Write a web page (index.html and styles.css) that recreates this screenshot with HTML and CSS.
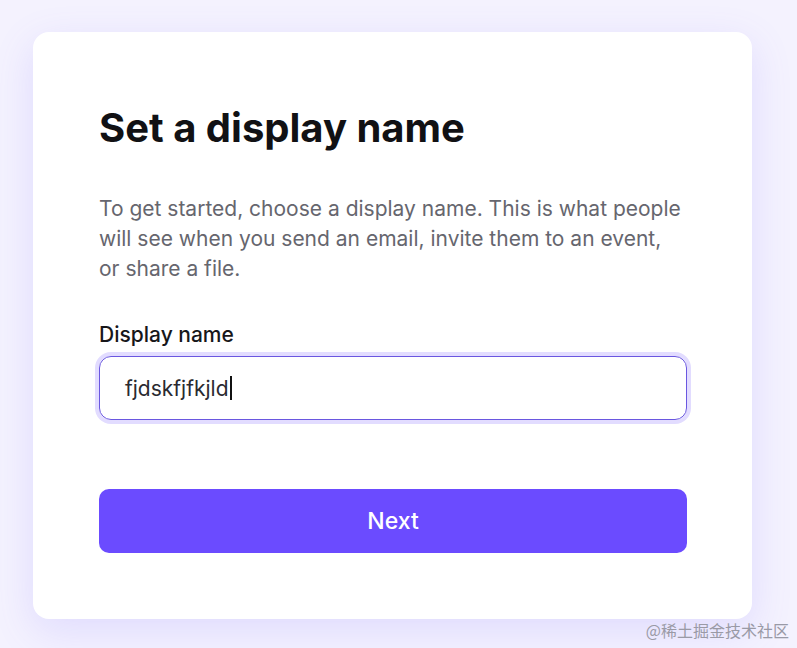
FILE: index.html
```html
<!DOCTYPE html>
<html lang="en">
<head>
<meta charset="utf-8">
<title>Set a display name</title>
<link rel="stylesheet" href="styles.css">
</head>
<body>
<main class="page">
  <section class="card">
    <h1 class="title">Set a display name</h1>
    <p class="desc">To get started, choose a display name. This is what people will see when you send an email, invite them to an event, or share a file.</p>
    <label class="field">
      <span class="label">Display name</span>
      <span class="input"><span class="value">fjdskfjfkjld</span><span class="caret"></span></span>
    </label>
    <button class="btn" type="button">Next</button>
  </section>
  <div class="watermark">@稀土掘金技术社区</div>
</main>
</body>
</html>
```
FILE: styles.css
```css
* { box-sizing: border-box; }
html, body { margin: 0; padding: 0; }
body {
  background: #f4f2fe;
  font-family: Inter, "Noto Sans", sans-serif;
  width: 797px;
  height: 648px;
  overflow: hidden;
}
.page {
  position: relative;
  height: 648px;
  padding: 32px 45px 0 33px;
}
.card {
  width: 719px;
  height: 587px;
  background: #fff;
  border-radius: 16px;
  box-shadow: 0 12px 40px rgba(120, 100, 255, 0.16);
  padding: 70px 65px 0 66px;
  display: flex;
  flex-direction: column;
}
.title {
  margin: 0;
  font-size: 40px;
  font-weight: 700;
  line-height: 52px;
  color: #111114;
}
.desc {
  margin: 40px 0 0;
  font-size: 21px;
  line-height: 30px;
  color: #66666e;
}
.field {
  display: flex;
  flex-direction: column;
  margin-top: 37px;
}
.label {
  font-size: 21px;
  font-weight: 500;
  line-height: 28px;
  color: #17171a;
}
.input {
  margin-top: 7px;
  height: 64px;
  border: 1px solid #6a57e0;
  border-radius: 12px;
  box-shadow: 0 0 0 4px #e2dcff;
  display: flex;
  align-items: center;
  padding-left: 25px;
  font-size: 21px;
  color: #2a2a30;
}
.caret {
  display: inline-block;
  width: 2px;
  height: 24px;
  background: #111;
  margin-left: 1px;
}
.btn {
  margin-top: 69px;
  height: 64px;
  border: 0;
  border-radius: 10px;
  background: #6b4bff;
  color: #fff;
  font-family: Inter, "Noto Sans", sans-serif;
  font-size: 23px;
  font-weight: 500;
}
.watermark {
  position: absolute;
  right: 8px;
  bottom: 6px;
  font-family: "Noto Sans CJK SC", sans-serif;
  font-size: 16px;
  color: #9a9aa6;
}
```
